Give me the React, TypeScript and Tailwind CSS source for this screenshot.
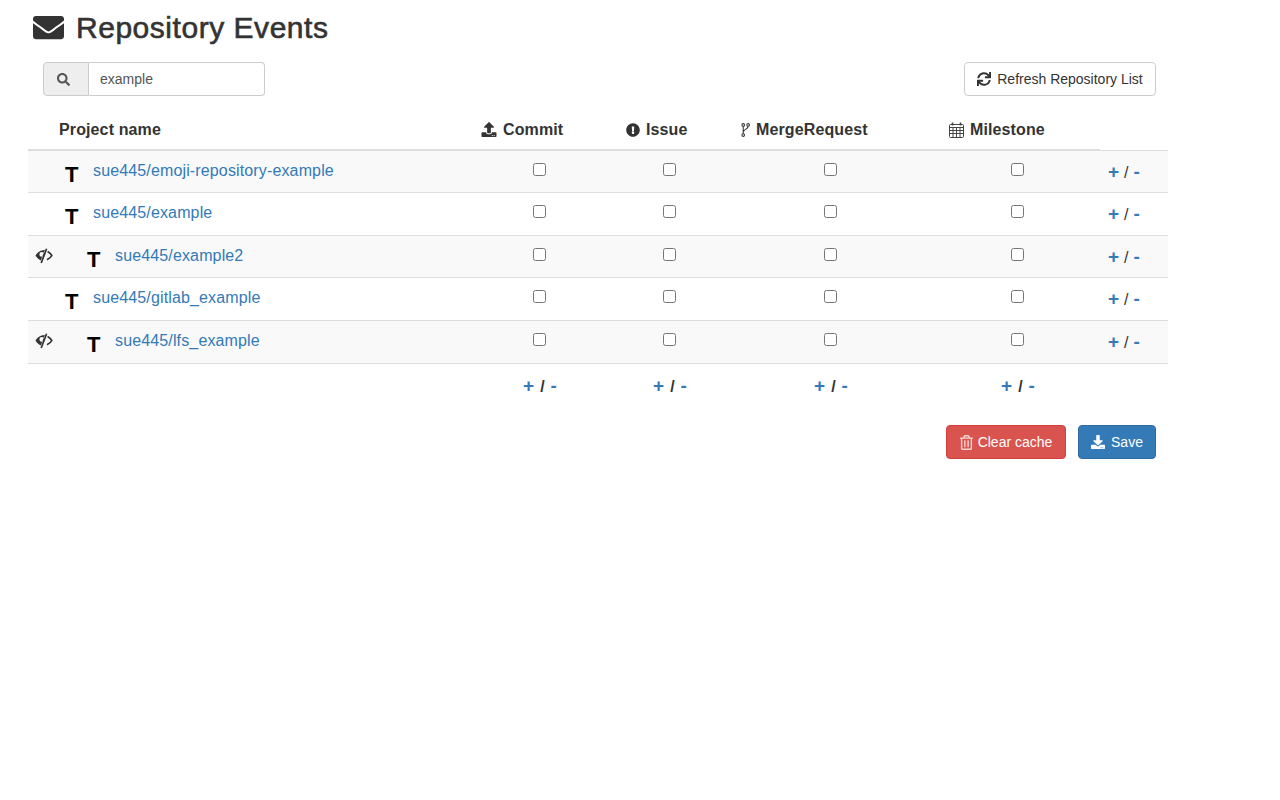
import { FaDownload, FaEnvelope, FaExclamationCircle, FaRegTrashAlt, FaSearch, FaSync, FaUpload } from "react-icons/fa";

const repos = [
  { name: "sue445/emoji-repository-example", hidden: false },
  { name: "sue445/example", hidden: false },
  { name: "sue445/example2", hidden: true },
  { name: "sue445/gitlab_example", hidden: false },
  { name: "sue445/lfs_example", hidden: true },
];

function ForkIcon() {
  return (
    <svg viewBox="0 0 10 16" className="h-[14px] w-[9px] shrink-0" fill="none" stroke="#333" strokeWidth="1.2">
      <circle cx="2.4" cy="2.2" r="1.5" />
      <circle cx="8" cy="2.2" r="1.5" />
      <circle cx="2.4" cy="13.8" r="1.5" />
      <path d="M2.4 3.7V12.3M8 3.7C8 7.5 2.4 7 2.4 10.5" />
    </svg>
  );
}

function CalendarIcon() {
  return (
    <svg viewBox="0 0 15 16" className="h-[16px] w-[15px] shrink-0" fill="none" stroke="#444" strokeWidth="1">
      <rect x="0.5" y="2.5" width="14" height="13" rx="1" />
      <path d="M0.5 5.5H14.5M0.5 8.5H14.5M0.5 11.5H14.5M4 5.5V15.5M7.5 5.5V15.5M11 5.5V15.5" />
      <path d="M3.5 0.5V3.5M11.5 0.5V3.5" strokeWidth="1.6" />
    </svg>
  );
}

function HiddenEyeIcon() {
  return (
    <svg viewBox="0 0 18 16" className="mt-[12px] mr-[34px] h-[16px] w-[18px] shrink-0 text-[#333]">
      <path
        fill="currentColor"
        fillRule="evenodd"
        d="M9.6 2C5.4 2 2.2 4.8 0.5 7.5C1.6 9.5 3.4 11.4 5.8 12.4L9.9 2ZM6.8 4A2.4 2.4 0 1 0 6.8 8.8A2.4 2.4 0 1 0 6.8 4Z"
      />
      <path fill="none" stroke="currentColor" strokeWidth="1.7" d="M11.6 0.8L6.2 15M12.6 3.6C14.4 4.6 16 6 16.8 7.5C16 9.2 14.2 10.8 12 11.8" />
    </svg>
  );
}

function PlusMinus({ footer }: { footer?: boolean }) {
  return (
    <span className="inline-flex items-baseline whitespace-nowrap text-[16px] leading-[20px]">
      <a href="#" className="text-[19px] font-bold text-[#337ab7]">+</a>
      <span className={footer ? "mx-[6px] font-bold text-[#333]" : "mx-[5px] text-[#333]"}>/</span>
      <a href="#" className="text-[19px] font-bold text-[#337ab7]">-</a>
    </span>
  );
}

function RepoRow({ name, hidden, odd, last }: { name: string; hidden: boolean; odd: boolean; last: boolean }) {
  return (
    <tr className={`border-t border-[#ddd] ${last ? "h-[43px]" : "h-[42.6px]"} ${odd ? "bg-[#f9f9f9]" : "bg-white"}`}>
      <td className="p-0 align-top">
        <div className={`flex items-start ${hidden ? "pl-[7px]" : "pl-[37px]"}`}>
          {hidden && <HiddenEyeIcon />}
          <span className="mt-[10px] w-[28px] text-[22px] font-bold leading-[28px] text-black">T</span>
          <a href="#" className="mt-[10px] text-[16px] leading-[20px] tracking-[0.14px] text-[#337ab7]">{name}</a>
        </div>
      </td>
      {[0, 1, 2, 3].map((i) => (
        <td key={i} className="p-0 pt-[12px] pr-[2px] align-top">
          <input type="checkbox" className="mx-auto block" />
        </td>
      ))}
      <td className="p-0 pt-[11px] pl-[8px] align-top">
        <PlusMinus />
      </td>
    </tr>
  );
}

export default function App() {
  return (
    <div className="min-h-[800px] bg-white pl-[28px] font-['Liberation_Sans',sans-serif] text-[14px] text-[#333]">
      <h1 className="flex h-[54px] items-center pl-[5px] text-[30px] font-medium leading-[33px] tracking-[0.53px] text-[#333] [-webkit-text-stroke:0.6px_#333]">
        <FaEnvelope className="mr-[12px] h-[31px] w-[31px]" />
        Repository Events
      </h1>

      <div className="mt-[8px] flex w-[1128px] items-center justify-between pl-[15px]">
        <div className="flex h-[34px] w-[222px]">
          <span className="flex w-[46px] items-center rounded-l border border-[#ccc] bg-[#eee] pl-[13px] text-[#555]">
            <FaSearch className="h-[13px] w-[13px]" />
          </span>
          <input
            type="text"
            defaultValue="example"
            className="w-[176px] rounded-r border border-l-0 border-[#ccc] bg-white px-[11px] text-[14px] text-[#555] outline-none"
          />
        </div>
        <button className="flex h-[34px] w-[192px] items-center justify-center rounded border border-[#ccc] bg-white text-[14px] text-[#333]">
          <FaSync className="mr-[6px] h-[14px] w-[14px]" />
          Refresh Repository List
        </button>
      </div>

      <table className="mt-[14px] w-[1140px] table-fixed border-collapse">
        <colgroup>
          <col className="w-[438px]" />
          <col className="w-[148px]" />
          <col className="w-[112px]" />
          <col className="w-[210px]" />
          <col className="w-[164px]" />
          <col className="w-[68px]" />
        </colgroup>
        <thead>
          <tr className="h-[40px] text-left text-[16px] font-bold tracking-[0.12px]">
            <th className="border-b-2 border-[#ddd] p-0 pl-[31px]">Project name</th>
            <th className="border-b-2 border-[#ddd] p-0 pl-[15px]">
              <span className="flex items-center gap-[6px]"><FaUpload className="h-[15px] w-[16px]" />Commit</span>
            </th>
            <th className="border-b-2 border-[#ddd] p-0 pl-[12px]">
              <span className="flex items-center gap-[6px]"><FaExclamationCircle className="h-[14px] w-[14px]" />Issue</span>
            </th>
            <th className="border-b-2 border-[#ddd] p-0 pl-[15px]">
              <span className="flex items-center gap-[6px]"><ForkIcon />MergeRequest</span>
            </th>
            <th className="border-b-2 border-[#ddd] p-0 pl-[13px]">
              <span className="flex items-center gap-[6px]"><CalendarIcon />Milestone</span>
            </th>
            <th className="border-b border-[#ddd] p-0"></th>
          </tr>
        </thead>
        <tbody>
          {repos.map((repo, i) => (
            <RepoRow key={repo.name} name={repo.name} hidden={repo.hidden} odd={i % 2 === 0} last={i === repos.length - 1} />
          ))}
          <tr className="h-[42px] border-t border-[#ddd] text-center">
            <td className="p-0"></td>
            <td className="p-0 pt-[4px]"><PlusMinus footer /></td>
            <td className="p-0 pt-[4px]"><PlusMinus footer /></td>
            <td className="p-0 pt-[4px]"><PlusMinus footer /></td>
            <td className="p-0 pt-[4px]"><PlusMinus footer /></td>
            <td className="p-0"></td>
          </tr>
        </tbody>
      </table>

      <div className="mt-[20px] flex w-[1128px] justify-end gap-[12px]">
        <button className="flex h-[34px] w-[120px] items-center justify-center gap-[5px] rounded border border-[#d43f3a] bg-[#d9534f] text-[14px] text-white">
          <FaRegTrashAlt className="h-[15px] w-[13px] text-[#f5d5d3]" />
          Clear cache
        </button>
        <button className="flex h-[34px] w-[78px] items-center justify-center gap-[6px] rounded border border-[#2e6da4] bg-[#337ab7] text-[14px] text-white">
          <FaDownload className="h-[14px] w-[14px]" />
          Save
        </button>
      </div>
    </div>
  );
}
